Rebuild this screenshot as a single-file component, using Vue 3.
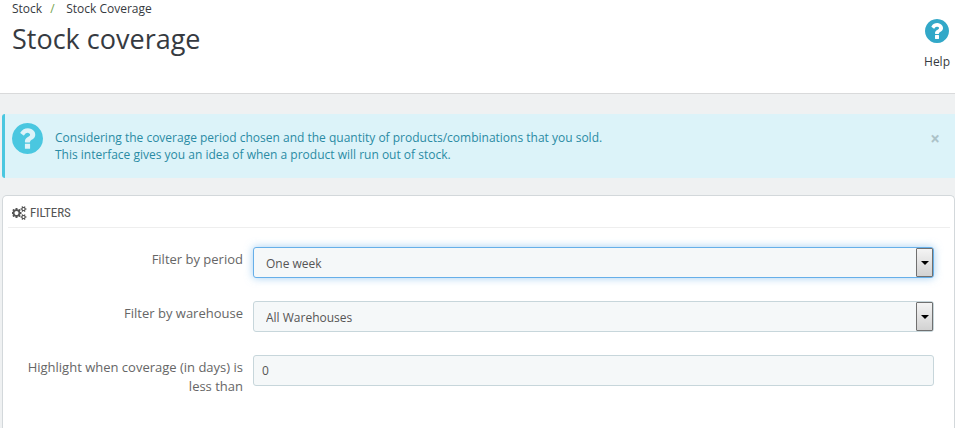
<script setup>
import { ref } from 'vue'

const period = ref('One week')
const warehouse = ref('All Warehouses')
const days = ref('0')
const noticeOpen = ref(true)

const questionPath =
  'M1024 1376v-192q0-14-9-23t-23-9h-192q-14 0-23 9t-9 23v192q0 14 9 23t23 9h192q14 0 23-9t9-23zm256-672q0-88-55.5-163t-138.5-116-170-41q-243 0-371 213-15 24 8 42l132 100q7 6 19 6 16 0 25-12 53-68 86-92 34-24 86-24 48 0 85.5 26t37.5 59q0 38-20 61t-68 45q-63 28-115.5 86.5t-52.5 125.5v36q0 14 9 23t23 9h192q14 0 23-9t9-23q0-19 21.5-49.5t54.5-49.5q32-18 49-28.5t46-35 44.5-48 28-60.5 12.5-81zm384 192q0 209-103 385.5t-279.5 279.5-385.5 103-385.5-103-279.5-279.5-103-385.5 103-385.5 279.5-279.5 385.5-103 385.5 103 279.5 279.5 103 385.5z'
const cogsPath =
  'M832 896q0-106-75-181t-181-75-181 75-75 181 75 181 181 75 181-75 75-181zm768 512q0-52-38-90t-90-38-90 38-38 90q0 53 37.5 90.5t90.5 37.5 90.5-37.5 37.5-90.5zm0-1024q0-52-38-90t-90-38-90 38-38 90q0 53 37.5 90.5t90.5 37.5 90.5-37.5 37.5-90.5zm-384 421v185q0 10-7 19.5t-16 10.5l-155 24q-11 35-32 76 34 48 90 115 7 11 7 20 0 12-7 19-23 30-82.5 89.5t-78.5 59.5q-11 0-21-7l-115-90q-37 19-77 31-11 108-23 155-7 24-30 24h-186q-11 0-20-7.5t-10-17.5l-23-153q-34-10-75-31l-118 89q-7 7-20 7-11 0-21-8-144-133-144-160 0-9 7-19 10-14 41-53t47-61q-23-44-35-82l-152-24q-10-1-17-9.5t-7-19.5v-185q0-10 7-19.5t16-10.5l155-24q11-35 32-76-34-48-90-115-7-11-7-20 0-12 7-20 22-30 82-89t79-59q11 0 21 7l115 90q34-18 77-32 11-108 23-154 7-24 30-24h186q11 0 20 7.5t10 17.5l23 153q34 10 75 31l118-89q8-7 20-7 11 0 21 8 144 133 144 160 0 8-7 19-12 16-42 54t-45 60q23 48 34 82l152 23q10 2 17 10.5t7 19.5zm640 533v140q0 16-149 31-12 27-30 52 51 113 51 138 0 4-4 7-122 71-124 71-8 0-46-47t-52-68q-20 2-30 2t-30-2q-14 21-52 68t-46 47q-2 0-124-71-4-3-4-7 0-25 51-138-18-25-30-52-149-15-149-31v-140q0-16 149-31 13-29 30-52-51-113-51-138 0-4 4-7 4-2 35-20t59-34 30-16q8 0 46 46.5t52 67.5q20-2 30-2t30 2q51-71 92-112l6-2q4 0 124 70 4 3 4 7 0 25-51 138 17 23 30 52 149 15 149 31zm0-1024v140q0 16-149 31-12 27-30 52 51 113 51 138 0 4-4 7-122 71-124 71-8 0-46-47t-52-68q-20 2-30 2t-30-2q-14 21-52 68t-46 47q-2 0-124-71-4-3-4-7 0-25 51-138-18-25-30-52-149-15-149-31v-140q0-16 149-31 13-29 30-52-51-113-51-138 0-4 4-7 4-2 35-20t59-34 30-16q8 0 46 46.5t52 67.5q20-2 30-2t30 2q51-71 92-112l6-2q4 0 124 70 4 3 4 7 0 25-51 138 17 23 30 52 149 15 149 31z'
</script>

<template>
  <div class="page">
    <header class="page-head">
      <div>
        <nav class="breadcrumb">
          <a href="#">Stock</a>
          <span class="slash">/</span>
          <a href="#">Stock Coverage</a>
        </nav>
        <h1>Stock coverage</h1>
      </div>
      <a class="help" href="#">
        <svg viewBox="128 128 1536 1536" aria-hidden="true"><path :d="questionPath" /></svg>
        <span>Help</span>
      </a>
    </header>

    <main>
      <section v-if="noticeOpen" class="notice">
        <svg viewBox="128 128 1536 1536" aria-hidden="true"><path :d="questionPath" /></svg>
        <p>
          Considering the coverage period chosen and the quantity of products/combinations that you sold.<br />
          This interface gives you an idea of when a product will run out of stock.
        </p>
        <button type="button" class="close" @click="noticeOpen = false">×</button>
      </section>

      <form class="panel" @submit.prevent>
        <h2>
          <svg viewBox="0 0 1920 1792" aria-hidden="true"><path :d="cogsPath" /></svg>
          <span>FILTERS</span>
        </h2>
        <div class="fields">
          <label for="period">Filter by period</label>
          <div class="select active">
            <select id="period" v-model="period">
              <option>One week</option>
            </select>
          </div>
          <label for="warehouse">Filter by warehouse</label>
          <div class="select">
            <select id="warehouse" v-model="warehouse">
              <option>All Warehouses</option>
            </select>
          </div>
          <label for="days">Highlight when coverage (in days) is less than</label>
          <input id="days" v-model="days" type="text" />
        </div>
      </form>
    </main>
  </div>
</template>

<style>
body {
  background: #eff1f2;
}
</style>

<style scoped>
*,
*::before {
  box-sizing: border-box;
}
.page {
  display: flex;
  flex-direction: column;
  min-height: 100vh;
  font: 12px/17px "Open Sans", sans-serif;
  color: #555;
}
a {
  color: #363a41;
  text-decoration: none;
}
svg {
  display: block;
  fill: currentColor;
}
.page-head {
  display: flex;
  justify-content: space-between;
  min-height: 94px;
  padding: 0 5px 0 12px;
  background: #fff;
  border-bottom: 1px solid #d9dadb;
}
.breadcrumb {
  display: flex;
  gap: 8px;
}
.slash {
  width: 8px;
  color: #72a24c;
}
h1 {
  margin: 4px 0 0;
  font-size: 27px;
  font-weight: 400;
  line-height: 36px;
  color: #363a41;
}
.help {
  display: flex;
  flex-direction: column;
  align-items: center;
  gap: 10px;
  padding-top: 19px;
}
.help svg {
  width: 24px;
  height: 24px;
  color: #32a8c8;
}
main {
  display: flex;
  flex: 1;
  flex-direction: column;
  gap: 17px;
  padding: 20px 0 0 2px;
}
.notice {
  display: flex;
  align-items: flex-start;
  min-height: 64px;
  padding: 9px 15px 8px 7px;
  color: #2a8ba4;
  background: #dcf3f9;
  border-left: 3px solid #4ac7e0;
  border-radius: 3px 0 0 3px;
}
.notice svg {
  flex: none;
  width: 31px;
  height: 31px;
  color: #4ac7e0;
}
.notice p {
  flex: 1;
  margin: 6px 12px 0;
}
.close {
  padding: 0;
  margin-top: 7px;
  font: 700 17px/17px "Open Sans", sans-serif;
  color: #acc2c8;
  background: none;
  border: 0;
}
.panel {
  flex: 1;
  padding: 0 4px 24px 5px;
  background: #fff;
  border: 1px solid #d3d8db;
  border-bottom: 0;
  border-radius: 5px 5px 0 0;
}
h2 {
  display: flex;
  align-items: center;
  gap: 3px;
  height: 32px;
  padding: 2px 4px 0;
  margin: 0;
  font: 400 13px/20px "Ubuntu Condensed", "Roboto Condensed", "Liberation Sans Narrow", "Open Sans Condensed Light", "Open Sans", sans-serif;
  color: #555;
  border-bottom: 1px solid #eee;
}
h2 svg {
  width: 15px;
  height: 14px;
}
.fields {
  display: grid;
  grid-template-columns: 1fr 3fr;
  gap: 23px 10px;
  align-items: start;
  padding: 19px 16px 0 8px;
}
label {
  padding-top: 3px;
  font-size: 13px;
  line-height: 19px;
  text-align: right;
  color: #666;
}
.select {
  position: relative;
}
.select::before {
  position: absolute;
  top: 1px;
  right: 1px;
  bottom: 1px;
  width: 17px;
  pointer-events: none;
  content: "";
  background: linear-gradient(#f4f4f4, #d2d2d2);
  border: 1px solid #707070;
  border-radius: 1px;
}
.select::after {
  position: absolute;
  top: 14px;
  right: 5px;
  pointer-events: none;
  content: "";
  border: 4px solid transparent;
  border-top-color: #000;
  border-bottom: 0;
}
select,
input {
  display: block;
  width: 100%;
  height: 31px;
  padding: 0 8px;
  font: 12px/17px "Open Sans", sans-serif;
  color: #555;
  appearance: none;
  background: #f5f8f9;
  border: 1px solid #c7d6db;
  border-radius: 3px;
  outline: 0;
}
select {
  padding: 2px 24px 0 12px;
}
.select.active select {
  border-color: #66afe9;
  box-shadow: 0 0 8px rgba(102, 175, 233, 0.6);
}
</style>
